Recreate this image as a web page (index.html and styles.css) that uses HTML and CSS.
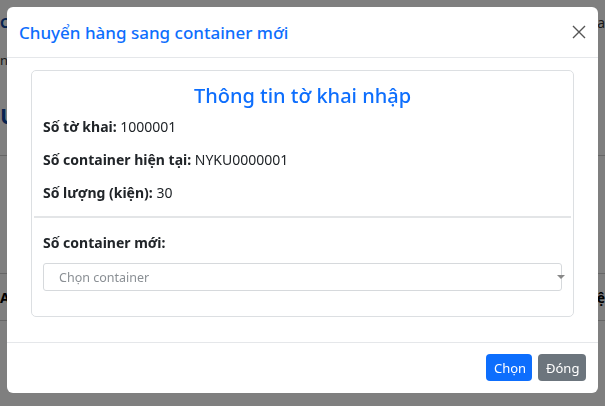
FILE: index.html
```html
<!DOCTYPE html>
<html lang="vi">
<head>
<meta charset="utf-8">
<title>Chuyển hàng sang container mới</title>
<link rel="stylesheet" href="styles.css">
</head>
<body>
<div class="page">
  <div class="page-row top"><span class="pg-blue">CẢ</span><span class="pg-right">pa</span></div>
  <div class="page-row small"><span class="pg-gray">n</span></div>
  <div class="page-row big"><span class="pg-blue-lg">U</span></div>
  <div class="page-row line"></div>
  <div class="page-row gap"></div>
  <div class="page-row line"></div>
  <div class="page-row ai"><span class="pg-dark">AI</span><span class="pg-right dark">ệ</span></div>
  <div class="page-row line"></div>
</div>

<div class="backdrop">
  <div class="modal">
    <div class="modal-header">
      <h5 class="modal-title">Chuyển hàng sang container mới</h5>
      <button class="btn-close" aria-label="Close">
        <svg width="14" height="14" viewBox="0 0 14 14"><path d="M1 1L13 13M13 1L1 13" stroke="#555" stroke-width="1.4" fill="none"/></svg>
      </button>
    </div>
    <div class="modal-body">
      <div class="card">
        <h4 class="card-title">Thông tin tờ khai nhập</h4>
        <p class="row"><b>Số tờ khai:</b> 1000001</p>
        <p class="row"><b>Số container hiện tại:</b> NYKU0000001</p>
        <p class="row"><b>Số lượng (kiện):</b> 30</p>
        <hr class="divider">
        <p class="row label"><b>Số container mới:</b></p>
        <div class="select">
          <span class="placeholder">Chọn container</span>
          <span class="arrow"></span>
        </div>
      </div>
    </div>
    <div class="modal-footer">
      <button class="btn btn-primary">Chọn</button>
      <button class="btn btn-secondary">Đóng</button>
    </div>
  </div>
</div>
</body>
</html>
```
FILE: styles.css
```css
* { box-sizing: border-box; }
html, body { margin: 0; padding: 0; }
body {
  width: 605px;
  height: 406px;
  overflow: hidden;
  font-family: "Noto Sans", "Open Sans", sans-serif;
  background: #fff;
  color: #212529;
}

/* background page (dimmed by backdrop) */
.page { width: 605px; }
.page-row { display: flex; justify-content: space-between; align-items: center; }
.page-row.top { height: 45px; }
.page-row.small { height: 30px; }
.page-row.big { height: 80px; }
.page-row.line { height: 1px; background: #ccc; }
.page-row.gap { height: 117px; }
.page-row.ai { height: 46px; }
.pg-blue { color: #0d47a1; font-weight: 700; font-size: 14px; }
.pg-blue-lg { color: #0d47a1; font-weight: 700; font-size: 22px; }
.pg-gray { color: #333; font-size: 13px; }
.pg-dark { color: #000; font-weight: 700; font-size: 14px; }
.pg-right { color: #333; font-size: 14px; }
.pg-right.dark { color: #000; font-weight: 700; }

.backdrop {
  position: fixed;
  inset: 0;
  background: rgba(0, 0, 0, 0.5);
  padding: 7px 7px 0 7px;
}

.modal {
  width: 591px;
  height: 386px;
  background: #fff;
  border-radius: 6px;
  display: flex;
  flex-direction: column;
}

.modal-header {
  height: 51px;
  flex: none;
  display: flex;
  align-items: center;
  justify-content: space-between;
  padding: 0 10px 0 12px;
  border-bottom: 1px solid #e5e7ea;
}
.modal-title {
  margin: 0;
  font-size: 17px;
  font-weight: 500;
  color: #0d6efd;
}
.btn-close {
  border: 0;
  background: transparent;
  padding: 0;
  width: 14px;
  height: 14px;
  margin-right: 2px;
  display: flex;
}

.modal-body {
  flex: 1;
  padding: 12px 24px 0 24px;
}

.card {
  border: 1px solid #dcdfe2;
  border-radius: 5px;
  height: 247px;
  padding: 12px 11px 0 11px;
}
.card-title {
  margin: 0 0 8px 0;
  text-align: center;
  font-size: 20px;
  line-height: 26px;
  font-weight: 500;
  color: #0d6efd;
}
.row {
  margin: 0 0 13px 0;
  font-size: 14px;
  line-height: 20px;
}
.row b { font-weight: 700; }
.divider {
  margin: 11px -9px 0 -9px;
  border: 0;
  height: 2px;
  background: #e3e5e7;
}
.row.label { margin: 15px 0 10px 0; }

.select {
  position: relative;
  height: 28px;
  border: 1px solid #d6d9dc;
  border-radius: 3px;
  display: flex;
  align-items: center;
  padding-left: 15px;
}
.placeholder { font-size: 12.5px; color: #8a8f94; }
.arrow {
  position: absolute;
  right: -4px;
  top: 11px;
  width: 0;
  height: 0;
  border-left: 4px solid transparent;
  border-right: 4px solid transparent;
  border-top: 4px solid #888;
}

.modal-footer {
  flex: none;
  height: 51px;
  border-top: 1px solid #e5e7ea;
  display: flex;
  justify-content: flex-end;
  align-items: flex-start;
  gap: 6px;
  padding: 11px 12px 0 0;
}
.btn {
  height: 27px;
  border: 0;
  border-radius: 4px;
  font-family: inherit;
  font-size: 13px;
  color: #fff;
  padding: 0 8px;
}
.btn-primary { background: #0d6efd; width: 46px; }
.btn-secondary { background: #6c757d; width: 48px; }
```
